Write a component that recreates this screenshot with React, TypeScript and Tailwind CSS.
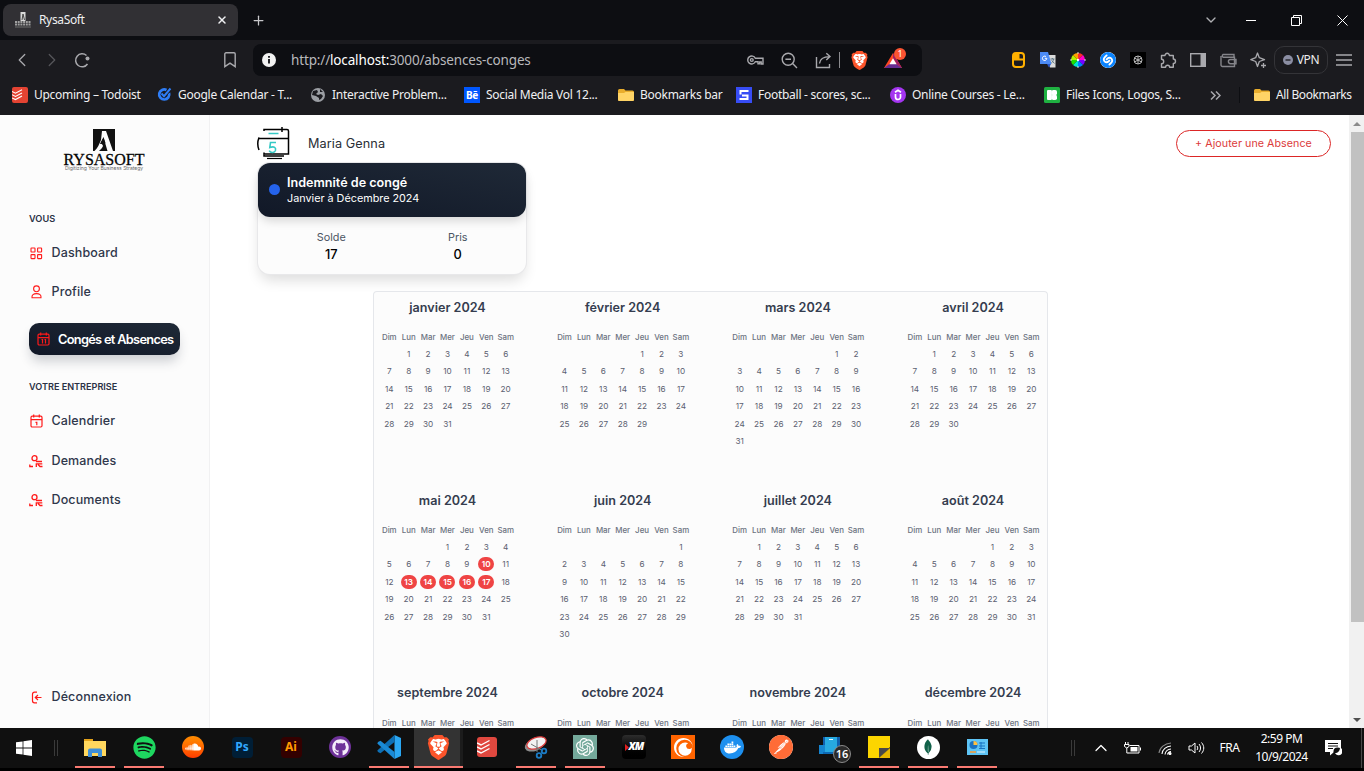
import React from "react";
import { FaGithub, FaSoundcloud, FaSpotify, FaDocker } from "react-icons/fa";
import { SiBrave, SiTodoist, SiOpenai, SiCrunchyroll, SiPostman, SiMongodb, SiShazam } from "react-icons/si";
import { ChevronLeft, ChevronRight, ChevronDown, ChevronUp, Plus, X } from "lucide-react";

/* ---------- browser chrome ---------- */

function TabStrip() {
  return (
    <div className="flex h-10 shrink-0 items-center bg-[#0d0e12] pl-[3px] text-[#e8e8ea]">
      <div className="flex h-8 w-[235px] items-center rounded-lg bg-[#313034] pr-[10px] pl-[12px]">
        <svg width="16" height="16" viewBox="0 0 16 16">
          <rect x="5.5" y="0" width="5" height="9" fill="#d8d8d8" />
          <path d="M7 8 L8 2 L9.5 8" stroke="#444" fill="none" />
          <path d="M0 10h16M0 12.5h16" stroke="#a0a0a0" strokeWidth="2" strokeDasharray="2 .7" />
          <path d="M0 15h16" stroke="#6e6e6e" />
        </svg>
        <span className="ml-2 flex-1 text-[12px] tracking-[-0.35px] text-[#f0f0f2]">RysaSoft</span>
        <X size={12} strokeWidth={3} className="text-[#f0f0f2]" />
      </div>
      <Plus size={15} strokeWidth={2} className="ml-[13px] text-[#c8c8cb]" />
      <div className="mr-[1.500px] ml-auto flex items-center">
        <div className="flex w-10 justify-center"><ChevronDown size={16} className="text-[#b0b0b4]" /></div>
        <div className="flex w-10 justify-center"><div className="h-px w-[10px] bg-white" /></div>
        <div className="flex w-[52px] justify-center">
          <svg width="11" height="11" viewBox="0 0 11 11" fill="none" stroke="#fff"><path d="M.5 2.5h8v8h-8zM2.5 2.5v-2h8v8h-2" /></svg>
        </div>
        <div className="flex w-[40px] justify-center">
          <svg width="11" height="11" viewBox="0 0 11 11" stroke="#fff"><path d="M.5 .5l10 10M10.5 .5l-10 10" /></svg>
        </div>
      </div>
    </div>
  );
}

function Cell({ children }: { children: React.ReactNode }) {
  return <div className="flex w-[30px] shrink-0 items-center justify-center">{children}</div>;
}

function BraveLion({ size }: { size: number }) {
  return (
    <svg width={size} height={size} viewBox="0 0 24 24">
      <path d="M6 3h12l3 5-3 10-6 4-6-4L3 8z" fill="#fff" />
      <SiBrave size={24} color="#fb542b" />
    </svg>
  );
}

const WHEEL = [
  { d: "M8 8V1A7 7 0 0 1 13 3z", c: "#ff2a2a" },
  { d: "M8 8L13 3A7 7 0 0 1 15 8z", c: "#ff00c8" },
  { d: "M8 8h7A7 7 0 0 1 13 13z", c: "#7a00ff" },
  { d: "M8 8l5 5A7 7 0 0 1 8 15z", c: "#0080ff" },
  { d: "M8 8v7A7 7 0 0 1 3 13z", c: "#00e5d0" },
  { d: "M8 8l-5 5A7 7 0 0 1 1 8z", c: "#1fe000" },
  { d: "M8 8H1A7 7 0 0 1 3 3z", c: "#b4f000" },
  { d: "M8 8L3 3A7 7 0 0 1 8 1z", c: "#ffa000" },
];

function Toolbar() {
  return (
    <div className="flex h-10 shrink-0 items-center pl-[7px] text-[#a9a9ad]">
      <Cell><ChevronLeft size={22} strokeWidth={1.4} /></Cell>
      <Cell><ChevronRight size={22} strokeWidth={1.4} className="text-[#56565a]" /></Cell>
      <Cell>
        <svg width="17" height="17" viewBox="0 0 17 17" fill="none" stroke="currentColor" strokeWidth="1.5">
          <path d="M13.500 12A6.500 6.500 0 1 1 12.500 3.5" /><circle cx="13.500" cy="6.500" r="2" fill="currentColor" stroke="none" />
        </svg>
      </Cell>
      <div className="ml-[118px] flex w-[30px] justify-center">
        <svg width="12" height="16" viewBox="0 0 12 16" fill="none" stroke="currentColor" strokeWidth="1.400"><path d="M.8 2A1.200 1.200 0 0 1 2 .8h8A1.200 1.200 0 0 1 11.200 2v12.700L6 11.200.8 14.700z" /></svg>
      </div>
      <div className="ml-2 flex h-8 w-[669px] items-center rounded-lg bg-[#0d0e12] pl-[9px]">
        <svg width="14" height="14" viewBox="0 0 14 14"><circle cx="7" cy="7" r="7" fill="#f2f2f2" /><path d="M7 6v4.5M7 3v1.8" stroke="#0d0e12" strokeWidth="1.8" /></svg>
        <span className="ml-[15px] w-[447px] text-[13.5px] tracking-[-0.15px] whitespace-nowrap text-[#b9b9bc]">
          http://<span className="text-white">localhost:</span>3000/absences-conges
        </span>
        <div className="flex w-[34px] justify-center">
          <svg width="17" height="12" viewBox="0 0 17 12" fill="none" stroke="currentColor" strokeWidth="1.4">
            <path d="M8.3 4.2A4 4 0 1 0 8.3 7.8H11v2h1.6V8h1.6v2H16V4.2z" /><circle cx="4.8" cy="6" r="1.4" />
          </svg>
        </div>
        <div className="flex w-[34px] justify-center">
          <svg width="17" height="17" viewBox="0 0 17 17" fill="none" stroke="currentColor" strokeWidth="1.4"><circle cx="7.2" cy="7.2" r="6" /><path d="M11.6 11.6l4.4 4.4M4.4 7.2h5.6" /></svg>
        </div>
        <div className="flex w-[34px] justify-center">
          <svg width="17" height="17" viewBox="0 0 17 17" fill="none" stroke="currentColor" strokeWidth="1.4"><path d="M1.5 5v10.5h13V12M4.5 11.5C5 7 8 4.6 14.5 4.6M11.3 1.2l3.7 3.4-3.7 3.4" /></svg>
        </div>
        <div className="-ml-px h-4 w-px bg-[#8a8a8e]" />
        <div className="ml-[9px] flex w-5 justify-center"><BraveLion size={19} /></div>
        <div className="relative ml-[14px] h-[17px] w-5">
          <svg width="20" height="17" viewBox="0 0 20 17"><path d="M10 1L1 16h18z" fill="#ff4724" /><path d="M1 16h18l-5.5-4h-7z" fill="#662d91" /><path d="M10 1l9 15-5.5-4L10 6z" fill="#9e1f63" /><path d="M10 6.2l-3.6 6h7.2z" fill="#fff" /></svg>
          <div className="absolute -top-[4px] left-[11px] flex h-3 w-3 items-center justify-center rounded-full bg-[#fb5432] text-[9px] leading-3 text-white">1</div>
        </div>
      </div>
      <div className="ml-[81px] flex items-center">
        <Cell><svg width="13" height="16" viewBox="0 0 13 16"><rect x="1" y="1" width="11" height="14" rx="3" fill="#1b1b1f" stroke="#ffb000" strokeWidth="2" /><path d="M6 1h1.500v6.500H6zM1 6.500h11V8.500H1z" fill="#ffb000" /><path d="M2 2h4v5H2z" fill="#ffb000" /></svg></Cell>
        <Cell>
          <svg width="16" height="16" viewBox="0 0 16 16"><path d="M6 3h9.500v12.500H10z" fill="#dcdcdc" /><path d="M0 0h8l3.500 12H0z" fill="#4c8bf5" /><path d="M7 12h4l-2 3.500z" fill="#2a56c6" /><path d="M4.800 6.300H6.800A2.200 2.200 0 1 1 6 4.600" stroke="#fff" fill="none" /><path d="M10.500 7h4M12.400 6v1M13.600 7c-.5 2.500-1.500 3.500-2.200 4M11.600 8.500l3 3" stroke="#607988" fill="none" /></svg>
        </Cell>
        <Cell><svg width="16" height="16" viewBox="0 0 16 16">{WHEEL.map((w) => <path key={w.c} d={w.d} fill={w.c} />)}<circle cx="8" cy="8" r="1.2" fill="#fff" /><path d="M8 0v2M8 14v2M0 8h2M14 8h2" stroke="#ddd" /></svg></Cell>
        <Cell><SiShazam size={16} color="#0a84ff" className="rounded-full bg-white" /></Cell>
        <Cell><svg width="16" height="16" viewBox="0 0 16 16" fill="none" stroke="#bbb"><path d="M0 0h16v16H0z" fill="#000" stroke="none" /><circle cx="8" cy="8" r="4" /><path d="M4.500 6l7 4M11.500 6l-7 4M8 4v8" /></svg></Cell>
        <Cell>
          <svg width="17" height="17" viewBox="0 0 17 17" fill="none" stroke="currentColor" strokeWidth="1.400"><path d="M1.500 3.500H5a2.200 2.200 0 1 1 4.400 0H13.300V7a2.200 2.200 0 1 1 0 4.400V15.300H9.600a2 2 0 1 0-4 0H1.500V11.600a2.200 2.200 0 1 0 0-4.400z" strokeLinejoin="round" /></svg>
        </Cell>
        <Cell><svg width="16" height="14" viewBox="0 0 16 14"><rect x=".7" y=".7" width="14.600" height="12.600" fill="none" stroke="currentColor" strokeWidth="1.400" /><path d="M10.500 0H16v14h-5.500z" fill="currentColor" /></svg></Cell>
        <Cell><svg width="17" height="15" viewBox="0 0 17 15" fill="none" stroke="#85858a" strokeWidth="1.400"><path d="M14 4V1.500H3A1.700 1.700 0 0 0 3 4.200h11.500V13.500H2.500A1.500 1.500 0 0 1 1 12V3M16 6.500H10.500a2 2 0 0 0 0 4.200H16z" /></svg></Cell>
        <Cell><svg width="17" height="17" viewBox="0 0 17 17" fill="none" stroke="currentColor" strokeWidth="1.300" strokeLinejoin="round"><path d="M7.500 1L9.300 5.700 14.500 7.700 9.300 9.500 7.500 14.500 5.700 9.500 .8 7.700 5.700 5.700zM13.500 11v5M11 13.500h5" /></svg></Cell>
      </div>
      <div className="ml-[1px] flex h-7 w-[54px] items-center justify-center gap-1 rounded-[10px] border border-[#343438] text-[12px] text-[#eee]">
        <svg width="10" height="10" viewBox="0 0 10 10"><circle cx="5" cy="5" r="5" fill="#8b8ea3" /><path d="M2.500 5h5" stroke="#1b1b1f" strokeWidth="1.300" /></svg>
        <span className="tracking-[-0.3px]">VPN</span>
      </div>
      <svg width="16" height="12" viewBox="0 0 16 12" className="ml-2" stroke="currentColor" strokeWidth="1.300"><path d="M0 1h16M0 6h16M0 11h16" /></svg>
    </div>
  );
}

function Folder() {
  return (
    <svg width="16" height="16" viewBox="0 0 16 16"><path d="M0 3.500a1.500 1.500 0 0 1 1.500-1.500H6l1.500 1.500h7A1.500 1.500 0 0 1 16 5v7.500a1.500 1.500 0 0 1-1.500 1.500h-13A1.500 1.500 0 0 1 0 12.500z" fill="#e9ad2c" /><path d="M0 6h6l1.500-1H16v7.500a1.500 1.500 0 0 1-1.500 1.500h-13A1.500 1.500 0 0 1 0 12.500z" fill="#ffd466" /></svg>
  );
}

function TodoistTile({ size }: { size: number }) {
  return (
    <svg width={size} height={size} viewBox="0 0 16 16" fill="none" stroke="#fff" strokeWidth="1.100"><rect width="16" height="16" rx="2" fill="#e44332" stroke="none" /><path d="M0 4.500l3.500 1.700L10 2.700M0 7.700l3.500 1.700L10 5.900M0 10.900l3.500 1.700L10 9.100" /></svg>
  );
}

const BOOKMARKS = [
  { label: "Upcoming – Todoist", w: "w-[144px]", icon: <TodoistTile size={16} /> },
  { label: "Google Calendar - T...", w: "w-[154px]", icon: <svg width="16" height="16" viewBox="0 0 16 16" fill="none"><path d="M13 6a5 5 0 1 1-2.500-3" stroke="#2e7df6" strokeWidth="2.800" /><path d="M5.500 6.500l2.700 2.700L14.500 2" stroke="#1b1b1f" strokeWidth="3" /><path d="M5.500 6.500l2.500 2.700L14.500 1.500" stroke="#2e7df6" strokeWidth="2" /></svg> },
  { label: "Interactive Problem...", w: "w-[154px]", icon: <svg width="16" height="16" viewBox="0 0 16 16"><circle cx="8" cy="8" r="7" fill="#9b9ea3" /><path d="M3 4l4-1 1 2-2 2 2 1 3-1 2 2-2 3-2 1v-2l-3-2-4-1M10 2l3 3h-3z" fill="#1b1b1f" /></svg> },
  { label: "Social Media Vol 12...", w: "w-[154px]", icon: <div className="flex h-4 w-4 items-center justify-center bg-[#0057ff] text-[10px] font-bold tracking-[-0.3px] text-white">Bē</div> },
  { label: "Bookmarks bar", w: "w-[118px]", icon: <Folder /> },
  { label: "Football - scores, sc...", w: "w-[154px]", icon: <svg width="16" height="16" viewBox="0 0 16 16" fill="none"><path d="M0 0h16v16H0z" fill="#374df5" /><path d="M12.500 4H4.500v3.500M3.500 12h8V8.500H6" stroke="#fff" strokeWidth="2" /></svg> },
  { label: "Online Courses - Le...", w: "w-[154px]", icon: <svg width="16" height="16" viewBox="0 0 16 16" fill="none"><circle cx="8" cy="8" r="8" fill="#a435f0" /><path d="M5.500 7v3a2.500 2.500 0 0 0 5 0V7M5 5.200l3-2 3 2" stroke="#fff" strokeWidth="1.700" /></svg> },
  { label: "Files Icons, Logos, S...", w: "w-[164px]", icon: <svg width="16" height="16" viewBox="0 0 16 16"><rect width="16" height="16" rx="1.500" fill="#1fb141" /><rect x="3" y="3" width="4.900" height="10" rx="1" fill="#fff" /><rect x="7.500" y="3" width="5.500" height="5.200" rx="1.800" fill="#fff" /><rect x="7.500" y="7.800" width="5.500" height="5.200" rx="1.800" fill="#fff" /></svg> },
];

function BookmarkBar() {
  return (
    <div className="flex h-[35px] shrink-0 items-center pb-[5px] pl-3 text-[12px] text-[#f0f0f2]">
      {BOOKMARKS.map((b) => (
        <div key={b.label} className={`flex shrink-0 items-center gap-[6px] whitespace-nowrap ${b.w}`}>
          <div className="shrink-0">{b.icon}</div>
          <span className="tracking-[-0.270px]">{b.label}</span>
        </div>
      ))}
      <svg width="11" height="9" viewBox="0 0 11 9" fill="none" stroke="#a9a9ad" strokeWidth="1.500" className="ml-[2px]"><path d="M1 .5l4 4-4 4M6 .5l4 4-4 4" /></svg>
      <div className="ml-[18px] h-4 w-px bg-[#0d0e12]" />
      <div className="ml-[14px] flex items-center gap-[6px] whitespace-nowrap"><Folder /><span className="tracking-[-0.4px]">All Bookmarks</span></div>
    </div>
  );
}

/* ---------- sidebar ---------- */

const red = { fill: "none", stroke: "#ff1a1a", strokeWidth: 1.1 };

const DashIcon = () => (
  <svg width="13" height="13" viewBox="0 0 13 13" {...red}><rect x="1" y="1" width="4" height="4" rx=".5" /><rect x="7.600" y="1" width="4" height="4" rx=".5" /><rect x="1" y="7.600" width="4" height="4" rx=".5" /><rect x="7.600" y="7.600" width="4" height="4" rx=".5" /></svg>
);
const UserIcon = () => (
  <svg width="13" height="14" viewBox="0 0 13 14" {...red}><circle cx="6.500" cy="3.800" r="2.900" /><path d="M2 12.800C1.600 10 3.500 8.600 6.500 8.600S11.400 10 11 12.800z" /></svg>
);
const CalIcon = ({ eleven }: { eleven?: boolean }) => (
  <svg width="13" height="14" viewBox="0 0 13 14" {...red} strokeWidth={1.200} className="shrink-0"><rect x="1" y="2.200" width="11" height="10.800" rx="1.200" /><path d="M1 5.700h11M3.700.5v3M9.300.5v3" />{eleven ? <path d="M4.500 7.500h1v4M7.500 7.500h1v4" /> : <path d="M5.500 8.300h1.300v3" />}</svg>
);
const RequestIcon = () => (
  <svg width="15" height="13" viewBox="0 0 15 13" {...red} strokeWidth={1.300}><circle cx="5.500" cy="3.200" r="2.500" /><path d="M.8 9.500v2h3.200M7 6.500h6M7.300 12V8.800h6M9 9.500l2 2h2.500" /></svg>
);
const LogoutIcon = () => (
  <svg width="13" height="13" viewBox="0 0 13 13" {...red} strokeWidth={1.200}><path d="M7 1.200H4.500A2 2 0 0 0 2.500 3.200v6.600a2 2 0 0 0 2 2H7M11.500 6.500H5.500M8 4L5.300 6.500 8 9" /></svg>
);

function NavItem({ icon, label, cls }: { icon: React.ReactNode; label: string; cls: string }) {
  return (
    <div className={`flex h-5 shrink-0 items-center text-[12.500px] font-medium text-[#2f374b] ${cls}`}>
      <div className="flex w-[22.500px] justify-start"><div className="flex w-[15px] justify-center">{icon}</div></div>
      <span className="tracking-[0.130px]">{label}</span>
    </div>
  );
}

function Sidebar() {
  return (
    <aside className="flex w-[210px] shrink-0 flex-col border-r border-[#f1f1f2] bg-[#fcfcfc] pl-[29px] font-['Inter',sans-serif]">
      <div className="mt-[13.500px] ml-[34px] flex h-[43.500px] w-[82px] shrink-0 flex-col items-center text-black">
        <svg width="22" height="22" viewBox="0 0 22 22" className="shrink-0"><path d="M0 0h22v22H0z" fill="#111" /><path d="M9 2h4l7 20h-5.500L10.500 8.500 7 15c4-1 4.500 3-1 7H1.500C5 19 6 15 8 11z" fill="#fcfcfc" /><path d="M10.500 8l2 6-2.500 3C9 14 7.500 15 7 15z" fill="#111" /></svg>
        <div className="mt-px font-['Liberation_Serif',serif] text-[16px] leading-[15px] tracking-[0px] whitespace-nowrap [-webkit-text-stroke:0.3px_#111]">RYSASOFT</div>
        <div className="-mt-[1.500px] text-[5px] leading-[6px] tracking-[0px] whitespace-nowrap text-[#666]">Digitizing Your Business Strategy</div>
      </div>
      <div className="mt-[41px] h-3 shrink-0 text-[9.200px] leading-3 font-semibold text-[#2a3145]">VOUS</div>
      <NavItem cls="mt-[18px]" icon={<DashIcon />} label="Dashboard" />
      <NavItem cls="mt-[19px]" icon={<UserIcon />} label="Profile" />
      <div className="mt-[21px] flex h-8 w-[151px] shrink-0 items-center rounded-[10px] bg-gradient-to-tr from-[#111827] to-[#1f2937] pl-[8px] shadow-[0_8px_12px_-2px_rgba(30,41,59,0.22)]">
        <CalIcon eleven />
        <span className="ml-2 pt-px text-[12.800px] font-semibold tracking-[-0.7px] whitespace-nowrap text-white">Congés et Absences</span>
      </div>
      <div className="mt-[26px] h-3 shrink-0 text-[9.100px] leading-3 font-semibold text-[#2a3145]">VOTRE ENTREPRISE</div>
      <NavItem cls="mt-[18px]" icon={<CalIcon />} label="Calendrier" />
      <NavItem cls="mt-5" icon={<RequestIcon />} label="Demandes" />
      <NavItem cls="mt-[19px]" icon={<RequestIcon />} label="Documents" />
      <NavItem cls="mt-auto mb-[21px]" icon={<LogoutIcon />} label="Déconnexion" />
    </aside>
  );
}

/* ---------- calendar ---------- */

const DAYS = ["Dim", "Lun", "Mar", "Mer", "Jeu", "Ven", "Sam"];
const MONTHS = ["janvier", "février", "mars", "avril", "mai", "juin", "juillet", "août", "septembre", "octobre", "novembre", "décembre"];
const ABSENCES: Record<number, number[]> = { 4: [10, 13, 14, 15, 16, 17] };

function Month({ index }: { index: number }) {
  const first = new Date(2024, index, 1).getDay();
  const count = new Date(2024, index + 1, 0).getDate();
  const cells = [...Array(first).fill(0), ...Array.from({ length: count }, (_, i) => i + 1)];
  return (
    <div className="h-[192.600px] w-[175.200px]">
      <div className="w-[135.800px]">
        <h3 className="h-5 text-center text-[12.600px] leading-5 font-semibold tracking-[0px] text-[#353d4f]">{MONTHS[index]} 2024</h3>
        <div className="mt-[13.400px] grid grid-cols-7 text-center text-[7.900px] leading-[12px] font-medium text-[#6b7280]">
          {DAYS.map((d) => <span key={d}>{d}</span>)}
        </div>
        <div className="mt-[2px] grid grid-cols-7 text-center text-[8.200px] text-[#5b6070]">
          {cells.map((n, i) => (
            <div key={i} className="flex h-[17.500px] items-center justify-center">
              {ABSENCES[index]?.includes(n)
                ? <span className="h-[14px] w-4 rounded-full bg-[#ef4444] leading-[14px] font-semibold text-white">{n}</span>
                : n || ""}
            </div>
          ))}
        </div>
      </div>
    </div>
  );
}

function Main() {
  return (
    <main className="flex min-w-0 flex-1 flex-col overflow-hidden bg-white font-['Inter',sans-serif]">
      <div className="mt-[11px] mb-[3px] flex h-[34px] shrink-0 items-center pr-[18px] pl-[47px]">
        <svg width="33" height="34" viewBox="0 0 33 34" fill="none" stroke="#000" strokeWidth="1.500">
          <path d="M7 5V3.500h18M25 1v5M22 3.500h8a1.500 1.500 0 0 1 1.500 1.500V28H7v-1.500" /><path d="M31 12.500H1.500" /><path d="M7 28.500v1.500h20" /><path d="M10 32.500h15" strokeWidth="1.200" /><path d="M2 11.500A17 17 0 0 0 2 24" />
          <path d="M11.500 7.500h10" stroke="#35c9c5" strokeWidth="1.500" />
          <path d="M19 16.500h-5.500l-.7 5c4.600-1.600 6.300.3 5.700 2.900-.7 2.600-4.900 2.800-6.300.3" stroke="#35c9c5" strokeWidth="1.600" />
        </svg>
        <span className="ml-[18px] pt-[2px] text-[12.700px] tracking-[0.070px] text-[#2b2f36]">Maria Genna</span>
        <button className="ml-auto h-[27px] w-[155px] rounded-full border border-[#dc2626] pt-[2px] text-[10.700px] tracking-[0.050px] text-[#dc3b3b]">+ Ajouter une Absence</button>
      </div>
      <section className="ml-12 h-[111px] w-[268px] shrink-0 rounded-xl bg-[#fcfcfc] shadow-[0_0_0_1px_#e8e8ea,0_8px_14px_-2px_rgba(0,0,0,0.14)]">
        <div className="flex h-[54px] items-center rounded-xl bg-gradient-to-tr from-[#111827] to-[#1f2937] pl-[10.500px] text-white shadow-[0_6px_10px_-2px_rgba(0,0,0,0.15)]">
          <div className="mb-px h-[11px] w-[11px] rounded-full bg-[#2563eb]" />
          <div className="ml-[7.500px]">
            <div className="text-[12.600px] leading-[17px] font-semibold">Indemnité de congé</div>
            <div className="text-[10.800px] leading-[15px]">Janvier à Décembre 2024</div>
          </div>
        </div>
        <div className="mt-[13px] flex justify-center gap-[66.500px] pl-[5px] text-center">
          <div className="w-[60px]"><div className="text-[10.800px] leading-4 text-[#4b5563]">Solde</div><div className="text-[12.800px] leading-[18px] font-medium">17</div></div>
          <div className="w-[60px]"><div className="text-[10.800px] leading-4 text-[#4b5563]">Pris</div><div className="text-[12.800px] leading-[18px] font-medium">0</div></div>
        </div>
      </section>
      <section className="mt-[17px] ml-[163px] flex w-[675px] shrink-0 flex-wrap content-start overflow-hidden rounded-t border border-b-0 border-[#e5e7eb] bg-[#fcfcfc] pt-[6px]">
        <div className="ml-[5.600px] grid grid-cols-[repeat(4,175.200px)]">
          {MONTHS.map((m, i) => <Month key={m} index={i} />)}
        </div>
      </section>
    </main>
  );
}

function Scrollbar() {
  return (
    <div className="flex w-[15px] shrink-0 flex-col items-center bg-[#f1f1f1] pl-px">
      <div className="flex h-[17px] items-center"><svg width="8" height="4"><path d="M0 4l4-4 4 4z" fill="#8b8b8b" /></svg></div>
      <div className="h-[490px] w-[13px] bg-[#c1c1c1]" />
      <div className="mt-auto flex h-[17px] items-center"><svg width="8" height="4"><path d="M0 0l4 4 4-4z" fill="#505050" /></svg></div>
    </div>
  );
}

/* ---------- taskbar ---------- */

const Round = ({ children, cls }: { children: React.ReactNode; cls: string }) => (
  <div className={`flex items-center justify-center ${cls}`}>{children}</div>
);

const APPS: { id: string; open?: boolean; active?: boolean; icon: React.ReactNode }[] = [
  { id: "explorer", open: true, icon: <svg width="22" height="19" viewBox="0 0 22 19"><path d="M0 1h9v17H0z" fill="#e3a21a" /><path d="M0 3h22v15H0z" fill="#ffd75e" /><path d="M4 19v-6.500a2 2 0 0 1 2-2h10a2 2 0 0 1 2 2V19h-4v-4H8v4z" fill="#3f8fd8" /></svg> },
  { id: "spotify", open: true, icon: <FaSpotify size={23} color="#1ed760" /> },
  { id: "soundcloud", icon: <Round cls="h-[22px] w-[22px] rounded-full bg-gradient-to-b from-[#ff8c00] to-[#ff3a00]"><FaSoundcloud size={16} color="#fff" /></Round> },
  { id: "photoshop", icon: <Round cls="h-[21px] w-[21px] rounded-[4px] bg-[#001e36] text-[12px] font-bold text-[#31a8ff]">Ps</Round> },
  { id: "illustrator", icon: <Round cls="h-[21px] w-[21px] rounded-[4px] bg-[#330000] text-[12px] font-bold text-[#ff9a00]">Ai</Round> },
  { id: "github", icon: <Round cls="h-[22px] w-[22px] rounded-full bg-[#6e3299]"><FaGithub size={17} color="#f4ecfa" /></Round> },
  { id: "vscode", open: true, icon: <svg width="24" height="24" viewBox="0 0 24 24"><path d="M17.500 0L24 3v18l-6.500 3z" fill="#2aa7f3" /><path d="M17.500 0v7L3.500 18.300 1 17 .3 15.500z" fill="#0d6fb5" /><path d="M17.500 24v-7L3.500 5.700 1 7 .3 8.500z" fill="#1a8ad6" /></svg> },
  { id: "brave", open: true, active: true, icon: <BraveLion size={25} /> },
  { id: "todoist", icon: <svg width="20" height="20" viewBox="0 0 20 20" fill="none" stroke="#fff" strokeWidth="1.400"><rect width="20" height="20" rx="3" fill="#e0483f" stroke="none" /><path d="M0 6l4 2 8.500-4.500M0 10l4 2 8.500-4.500M0 14l4 2 8.500-4.500" /></svg> },
  { id: "snip", open: true, icon: <svg width="24" height="23" viewBox="0 0 24 23" fill="none"><ellipse cx="10.500" cy="9" rx="10" ry="6" transform="rotate(-20 10.500 9)" fill="#8c8c8c" /><ellipse cx="12.500" cy="7" rx="10" ry="5.500" transform="rotate(-20 12.500 7)" fill="#f3f3f3" stroke="#d93a3a" strokeWidth="1.200" /><path d="M13 4v12M7 8l12 7" stroke="#777" /><circle cx="20" cy="15" r="2.300" stroke="#1b7bc4" strokeWidth="1.800" /><circle cx="15" cy="19.500" r="2.300" stroke="#1b7bc4" strokeWidth="1.800" /></svg> },
  { id: "chatgpt", open: true, icon: <Round cls="h-6 w-6 bg-[#74a99b]"><SiOpenai size={18} color="#fff" /></Round> },
  { id: "xm", icon: <Round cls="h-6 w-6 rounded-[4px] bg-gradient-to-b from-[#2d2d2d] to-black text-[10.500px] font-black tracking-[-0.8px] text-white italic"><svg width="4" height="7" viewBox="0 0 4 7" className="shrink-0"><path d="M0 0l4 3.500L0 7z" fill="#e02020" /></svg>XM</Round> },
  { id: "crunchyroll", icon: <Round cls="h-6 w-6 bg-[#ff6400]"><SiCrunchyroll size={19} color="#fff" /></Round> },
  { id: "docker", icon: <Round cls="h-6 w-6 rounded-full bg-[#1d8fee]"><FaDocker size={17} color="#fff" /></Round> },
  { id: "postman", icon: <Round cls="h-6 w-6 rounded-full bg-white"><SiPostman size={24} color="#ff6c37" /></Round> },
  { id: "phone", icon: <div className="relative"><svg width="24" height="20" viewBox="0 0 24 20"><path d="M5 0h17v14H5z" fill="#0f5fae" /><path d="M1 8h6v9H1z" fill="#1584cf" /><path d="M7 0h12v16H7z" fill="#27a9e1" /><path d="M5 15h14v2H5z" fill="#0c68b3" /><path d="M11 2.500h4" stroke="#e9f8ff" /></svg><div className="absolute top-[8px] left-[15px] flex h-[18px] w-[18px] items-center justify-center rounded-full border border-[#8a8a8a] bg-[#2b2b2b] text-[11px] leading-4 font-semibold text-white">16</div></div> },
  { id: "notes", open: true, icon: <svg width="22" height="22" viewBox="0 0 22 22"><path d="M0 0h22v11L11 22H0z" fill="#fcd500" /><path d="M11 12h11L11 22z" fill="#494949" /><path d="M22 12v10H11z" fill="#e8b800" /></svg> },
  { id: "mongodb", open: true, icon: <Round cls="h-[23px] w-[23px] rounded-full bg-white"><SiMongodb size={16} color="#116149" /></Round> },
  { id: "panel", open: true, icon: <svg width="21" height="16" viewBox="0 0 21 16"><path d="M0 0h21v16H0z" fill="#5ec4f5" /><circle cx="6.500" cy="6" r="4" fill="#1972c2" /><path d="M6.500 6V2a4 4 0 0 1 4 4z" fill="#ffbf3f" /><path d="M12 4h6M12 7h6M12 9.500h6M14 3v7" stroke="#1972c2" /><path d="M3 13h6" stroke="#ff9d2f" strokeWidth="1.500" /><path d="M10 13h8" stroke="#e6f7ff" /></svg> },
];

const Divider = () => <div className="h-4 w-1 shrink-0 border-x border-[#3a3a3a]" />;

function Taskbar() {
  return (
    <div className="h-[43px] shrink-0 border-b-[3px] border-black bg-[#101010] text-white">
      <div className="flex h-10 items-center pl-4">
        <svg width="16" height="16" viewBox="0 0 16 16" fill="#fff"><path d="M0 2.300L6.600 1.400v6.200H0zM7.400 1.300L16 0v7.600H7.400zM0 8.400h6.600v6.200L0 13.700zM7.400 8.400H16V16l-8.600-1.300z" /></svg>
        <div className="ml-[22px]"><Divider /></div>
        <div className="ml-[12.500px] flex">
          {APPS.map((a) => (
            <div key={a.id} className={a.active ? "flex h-10 w-[49px] flex-col bg-[#333] [box-shadow:inset_-4px_0_0_-1px_#1c1c1c]" : "flex h-10 w-[49px] flex-col"}>
              <div className="flex flex-1 items-center justify-center">{a.icon}</div>
              <div className={a.open ? (a.active ? "h-[2px] w-full bg-[#fa7a72]" : "mx-auto h-[2px] w-10 bg-[#fa7a72]") : "h-[2px]"} />
            </div>
          ))}
        </div>
        <div className="ml-[69px]"><Divider /></div>
        <div className="ml-[16px] flex w-[20px] justify-center"><ChevronUp size={20} strokeWidth={1.500} /></div>
        <svg width="17" height="13" viewBox="0 0 17 13" fill="none" stroke="#fff" className="ml-[13px]"><path d="M5.500 3.500h9.500v7.500H4.500M16.500 5.500v3" /><path d="M6.500 5h7v4.500h-7z" fill="#fff" stroke="none" /><path d="M1.500 0v2M4 0v2M.5 2.500h4.500v2l-2.200 1.500L.5 4.500zM2.800 6v5h2" /></svg>
        <svg width="15" height="14" viewBox="0 0 15 14" fill="none" stroke="#fff" strokeWidth="1.100" className="ml-[17px]"><path d="M1 12A13 11 0 0 1 13 2" stroke="#888" /><path d="M4 13A9.500 8.500 0 0 1 13 5M7 13.500A6.500 6 0 0 1 13 8M9.500 13.500A4 4 0 0 1 13 10.500" /><circle cx="12" cy="12.500" r="1" fill="#fff" /></svg>
        <svg width="17" height="14" viewBox="0 0 17 14" fill="none" stroke="#fff" className="ml-[15px]"><path d="M1 5h2.500L7 2v10L3.500 9H1zM9 5c1 1.500 1 2.500 0 4M11 3c2 2.500 2 5.500 0 8M13.500 1.500c3 3.500 3 7.500 0 11" /></svg>
        <span className="ml-[15px] w-[24px] text-[12px] tracking-[-0.5px]">FRA</span>
        <div className="ml-[9px] w-[58px] pb-px text-center text-[12px] leading-[18px] tracking-[-0.5px] whitespace-nowrap"><div>2:59 PM</div><div>10/9/2024</div></div>
        <svg width="17" height="16" viewBox="0 0 17 16" className="ml-[14px]"><path d="M0 0h16v12H9l-4 3.500V12H0z" fill="#fff" /><path d="M3 3.500h10M3 6h10M3 8.500h5" stroke="#101010" /><circle cx="12.500" cy="11.500" r="4" fill="#101010" /><path d="M15 7.500a4 4 0 1 1-5 5.500c3 0 5-2 5-5.500z" fill="#fff" /></svg>
        <div className="mr-[2px] ml-auto h-10 w-px bg-[#484848]" />
      </div>
    </div>
  );
}

export default function App() {
  return (
    <div className="flex h-[771px] w-[1364px] flex-col overflow-hidden bg-[#1b1b1f] font-['Noto_Sans',sans-serif]">
      <TabStrip />
      <Toolbar />
      <BookmarkBar />
      <div className="flex h-[613px] shrink-0 overflow-hidden">
        <Sidebar />
        <Main />
        <Scrollbar />
      </div>
      <Taskbar />
    </div>
  );
}
